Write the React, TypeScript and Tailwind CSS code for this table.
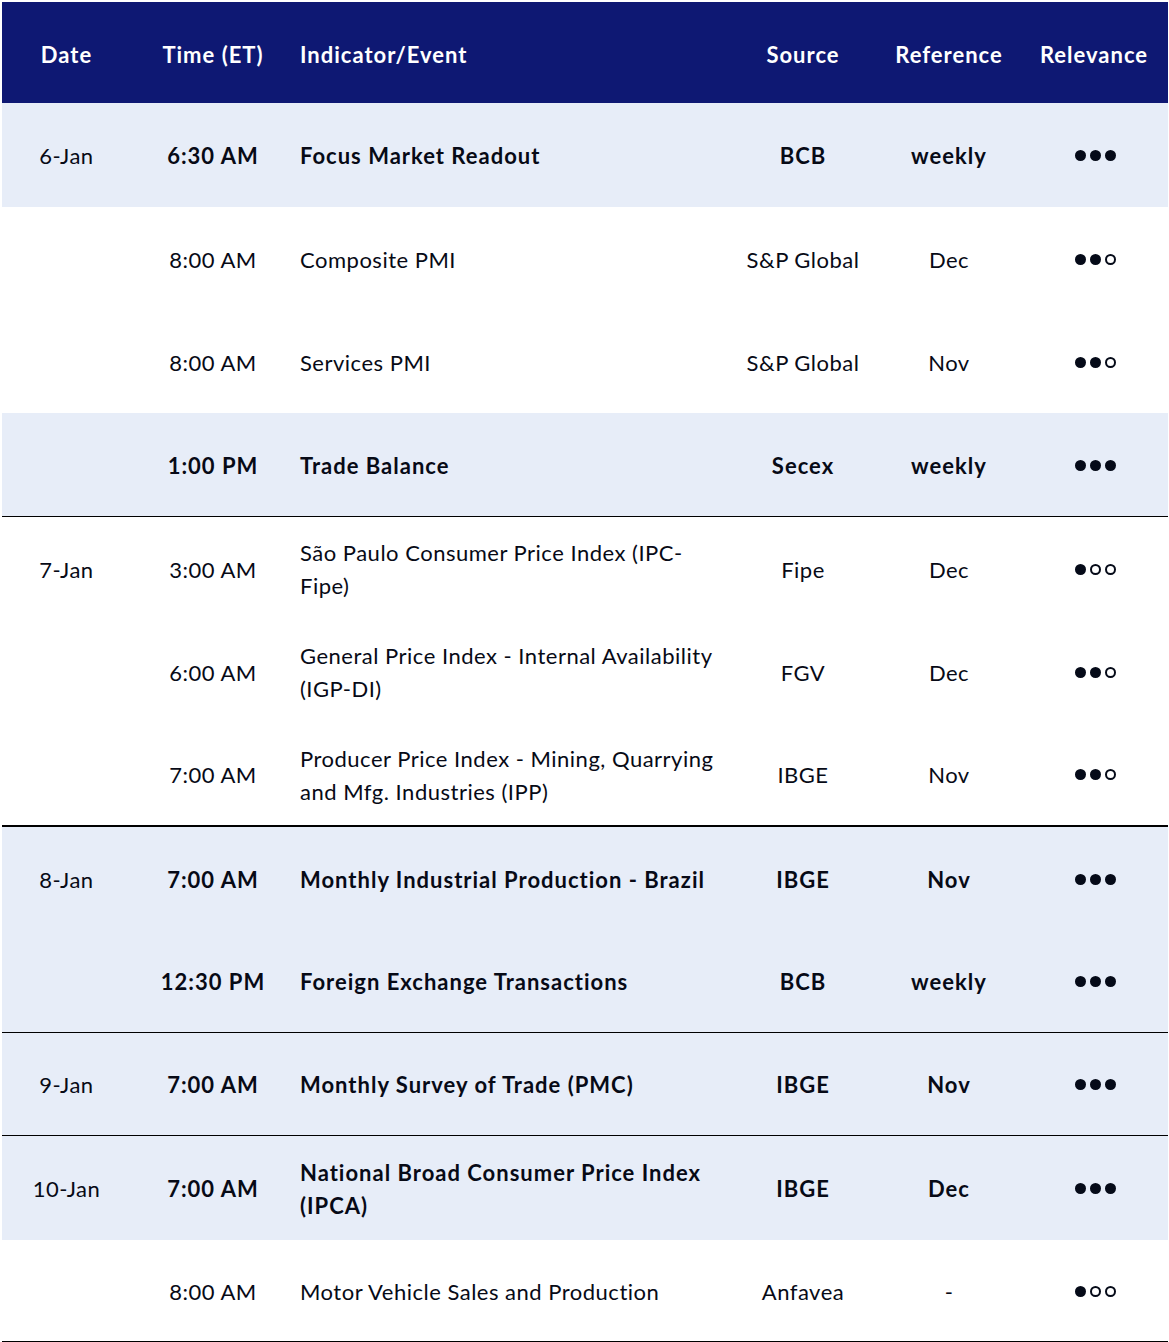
import React from "react";

type Row = {
  date?: string;
  time: string;
  event: string;
  source: string;
  reference: string;
  relevance: number;
  h: string;
  bold?: boolean;
  shaded?: boolean;
  border?: "thin" | "thick";
};

const rows: Row[] = [
  { date: "6-Jan", time: "6:30 AM", event: "Focus Market Readout", source: "BCB", reference: "weekly", relevance: 3, h: "h-[104px]", bold: true, shaded: true },
  { time: "8:00 AM", event: "Composite PMI", source: "S&P Global", reference: "Dec", relevance: 2, h: "h-[103px]" },
  { time: "8:00 AM", event: "Services PMI", source: "S&P Global", reference: "Nov", relevance: 2, h: "h-[103px]" },
  { time: "1:00 PM", event: "Trade Balance", source: "Secex", reference: "weekly", relevance: 3, h: "h-[104px]", bold: true, shaded: true, border: "thin" },
  { date: "7-Jan", time: "3:00 AM", event: "São Paulo Consumer Price Index (IPC-Fipe)", source: "Fipe", reference: "Dec", relevance: 1, h: "h-[103px]" },
  { time: "6:00 AM", event: "General Price Index - Internal Availability (IGP-DI)", source: "FGV", reference: "Dec", relevance: 2, h: "h-[103px]" },
  { time: "7:00 AM", event: "Producer Price Index - Mining, Quarrying and Mfg. Industries (IPP)", source: "IBGE", reference: "Nov", relevance: 2, h: "h-[104px]", border: "thick" },
  { date: "8-Jan", time: "7:00 AM", event: "Monthly Industrial Production - Brazil", source: "IBGE", reference: "Nov", relevance: 3, h: "h-[103px]", bold: true, shaded: true },
  { time: "12:30 PM", event: "Foreign Exchange Transactions", source: "BCB", reference: "weekly", relevance: 3, h: "h-[103px]", bold: true, shaded: true, border: "thin" },
  { date: "9-Jan", time: "7:00 AM", event: "Monthly Survey of Trade (PMC)", source: "IBGE", reference: "Nov", relevance: 3, h: "h-[103px]", bold: true, shaded: true, border: "thin" },
  { date: "10-Jan", time: "7:00 AM", event: "National Broad Consumer Price Index (IPCA)", source: "IBGE", reference: "Dec", relevance: 3, h: "h-[104px]", bold: true, shaded: true },
  { time: "8:00 AM", event: "Motor Vehicle Sales and Production", source: "Anfavea", reference: "-", relevance: 1, h: "h-[102px]", border: "thin" },
];

const cols = "grid grid-cols-[129px_164px_435px_146px_146px_146px]";

function Dots({ level }: { level: number }) {
  return (
    <div className="flex items-center gap-[4px]">
      {[0, 1, 2].map((i) =>
        i < level ? (
          <span key={i} className="w-[11px] h-[11px] rounded-full bg-[#050a18]" />
        ) : (
          <span key={i} className="w-[11px] h-[11px] rounded-full border-2 border-[#050a18]" />
        )
      )}
    </div>
  );
}

export default function App() {
  return (
    <div className="min-h-screen bg-white pt-[2px] pl-[2px] font-['Lato',sans-serif] text-[22px] tracking-[0.5px] text-[#070a16]">
      <div className="w-[1166px]">
        {/* Header */}
        <div className={`${cols} h-[101px] pt-[3px] bg-[#0e1873] text-white font-bold tracking-[1px] items-center`}>
          <div className="text-center">Date</div>
          <div className="text-center">Time (ET)</div>
          <div className="pl-[5px]">Indicator/Event</div>
          <div className="text-center">Source</div>
          <div className="text-center">Reference</div>
          <div className="text-center pr-[2px]">Relevance</div>
        </div>

        {rows.map((r, i) => {
          const b = r.bold ? "font-bold tracking-[1px]" : "";
          return (
            <div
              key={i}
              className={`${cols} ${r.h} pt-[1px] items-center leading-[33px] ${
                r.shaded ? "bg-[#e7edf8]" : "bg-white"
              } ${r.border === "thin" ? "border-b border-black" : ""} ${
                r.border === "thick" ? "border-b-2 border-black" : ""
              }`}
            >
              <div className="text-center">{r.date}</div>
              <div className={`text-center ${b}`}>{r.time}</div>
              <div className={`pl-[5px] pr-[5px] ${b}`}>{r.event}</div>
              <div className={`text-center ${b}`}>{r.source}</div>
              <div className={`text-center ${b}`}>{r.reference}</div>
              <div className="flex justify-center">
                <Dots level={r.relevance} />
              </div>
            </div>
          );
        })}
      </div>
    </div>
  );
}
